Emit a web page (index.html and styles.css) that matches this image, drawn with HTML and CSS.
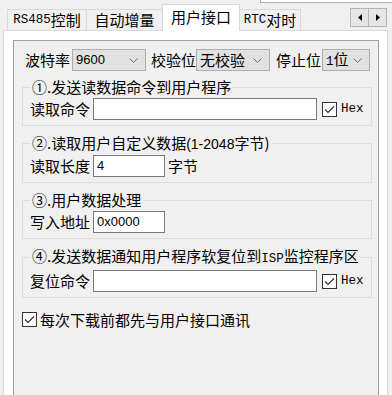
FILE: index.html
```html
<!DOCTYPE html>
<html lang="zh">
<head>
<meta charset="utf-8">
<title>用户接口</title>
<link rel="stylesheet" href="styles.css">
</head>
<body>
<div class="topstrip"><div class="topbox"></div></div>
<div class="tabbar">
  <div class="tab t1"><span class="mono">RS485</span>控制</div>
  <div class="tab t2">自动增量</div>
  <div class="tab sel">用户接口</div>
  <div class="tab t4"><span class="mono">RTC</span>对时</div>
  <div class="arrows">
    <div class="arrow"><svg width="4" height="7" viewBox="0 0 4 7"><polygon points="4,0 4,7 0,3.5" fill="#000"/></svg></div>
    <div class="arrow"><svg width="4" height="7" viewBox="0 0 4 7"><polygon points="0,0 0,7 4,3.5" fill="#000"/></svg></div>
  </div>
</div>
<div class="panel">
  <div class="frame">
    <div class="row1">
      <span class="lbl">波特率</span>
      <div class="combo c1"><span class="num">9600</span><svg class="chev" width="9" height="5" viewBox="0 0 9 5"><polyline points="0.5,0.5 4.5,4.5 8.5,0.5" fill="none" stroke="#6d6d6d"/></svg></div>
      <span class="lbl l2">校验位</span>
      <div class="combo c2"><span>无校验</span><svg class="chev" width="9" height="5" viewBox="0 0 9 5"><polyline points="0.5,0.5 4.5,4.5 8.5,0.5" fill="none" stroke="#6d6d6d"/></svg></div>
      <span class="lbl l3">停止位</span>
      <div class="combo c3"><span><span class="mono">1</span>位</span><svg class="chev" width="9" height="5" viewBox="0 0 9 5"><polyline points="0.5,0.5 4.5,4.5 8.5,0.5" fill="none" stroke="#6d6d6d"/></svg></div>
    </div>

    <fieldset class="group g1">
      <legend>①.发送读数据命令到用户程序</legend>
      <div class="line">
        <span class="lbl">读取命令</span>
        <div class="input wide"></div>
        <span class="chk"><svg width="15" height="15" viewBox="0 0 15 15"><rect x="0.5" y="0.5" width="14" height="14" fill="#fff" stroke="#333"/><polyline points="3,7.5 6,10.5 12,4.5" fill="none" stroke="#333" stroke-width="1.2"/></svg></span>
        <span class="mono hex">Hex</span>
      </div>
    </fieldset>

    <fieldset class="group">
      <legend>②.读取用户自定义数据<span class="num2">(1-2048</span>字节)</legend>
      <div class="line">
        <span class="lbl">读取长度</span>
        <div class="input short"><span class="num">4</span></div>
        <span class="lbl after">字节</span>
      </div>
    </fieldset>

    <fieldset class="group">
      <legend>③.用户数据处理</legend>
      <div class="line">
        <span class="lbl">写入地址</span>
        <div class="input short"><span class="num">0x0000</span></div>
      </div>
    </fieldset>

    <fieldset class="group">
      <legend>④.发送数据通知用户程序软复位到<span class="mono">ISP</span>监控程序区</legend>
      <div class="line">
        <span class="lbl">复位命令</span>
        <div class="input wide"></div>
        <span class="chk"><svg width="15" height="15" viewBox="0 0 15 15"><rect x="0.5" y="0.5" width="14" height="14" fill="#fff" stroke="#333"/><polyline points="3,7.5 6,10.5 12,4.5" fill="none" stroke="#333" stroke-width="1.2"/></svg></span>
        <span class="mono hex">Hex</span>
      </div>
    </fieldset>

    <div class="opt">
      <span class="chk0"><svg width="15" height="15" viewBox="0 0 15 15"><rect x="0.5" y="0.5" width="14" height="14" fill="#fff" stroke="#333"/><polyline points="3,7.5 6,10.5 12,4.5" fill="none" stroke="#333" stroke-width="1.2"/></svg></span>
      <span class="lbl">每次下载前都先与用户接口通讯</span>
    </div>
  </div>
</div>
</body>
</html>
```

FILE: styles.css
```css
html, body {
  margin: 0;
  padding: 0;
}
body {
  background: #f0f0f0;
  width: 392px;
  height: 395px;
  overflow: hidden;
  font-family: "Noto Sans CJK SC", sans-serif;
  font-size: 15px;
  line-height: 18px;
  color: #000;
}
.mono {
  font-family: "Liberation Mono", "Noto Sans CJK SC", monospace;
  font-size: 12.5px;
}
.num {
  font-family: "Liberation Sans", sans-serif;
  font-size: 13px;
}
.num2 {
  font-family: "Liberation Sans", sans-serif;
  font-size: 14px;
}

/* top fragment */
.topstrip {
  height: 3px;
  display: flex;
  justify-content: flex-end;
}
.topbox {
  width: 131px;
  height: 2px;
  background: #fff;
  border-left: 1px solid #adadad;
  border-bottom: 1px solid #adadad;
}

/* tabs */
.tabbar {
  display: flex;
  align-items: flex-start;
  height: 28px;
  margin-bottom: -1px;
  padding-left: 7px;
}
.tab {
  box-sizing: border-box;
  height: 21px;
  margin-top: 6px;
  border: 1px solid #d9d9d9;
  border-bottom: none;
  background: #f0f0f0;
  display: flex;
  align-items: center;
  justify-content: center;
  white-space: nowrap;
  padding-bottom: 1px;
}
.tab + .tab {
  margin-left: -1px;
}
.t1 { width: 80px; }
.t2 { width: 77px; }
.sel {
  width: 78px;
  height: 27px;
  margin-top: 1px;
  background: #fff;
  position: relative;
  z-index: 1;
  padding-bottom: 2px;
}
.t4 { width: 62px; }
.arrows {
  margin-left: auto;
  margin-right: 5px;
  margin-top: 5px;
  display: flex;
}
.arrow {
  box-sizing: border-box;
  width: 19px;
  height: 19px;
  border: 1px solid #b4b4b4;
  background: #e6e6e6;
  display: flex;
  align-items: center;
  justify-content: center;
}
.arrow + .arrow {
  margin-left: -1px;
}

/* panel */
.panel {
  margin-left: 3px;
  width: 385px;
  height: 365px;
  overflow: hidden;
  box-sizing: border-box;
  border: 1px solid #d9d9d9;
  border-bottom: none;
  background: #fff;
  padding: 9px 8px 0 9px;
}
.frame {
  border: 1px solid #a0a0a0;
  background: #f0f0f0;
  padding: 8px 6px 0 8px;
  height: 360px;
}

.lbl {
  white-space: nowrap;
}
.row1 {
  display: flex;
  align-items: center;
  height: 22px;
  padding-left: 3px;
}
.combo {
  box-sizing: border-box;
  height: 22px;
  border: 1px solid #adadad;
  background: #e1e1e1;
  display: flex;
  align-items: center;
  justify-content: space-between;
  padding: 0 7px 0 3px;
  white-space: nowrap;
}
.c1 { width: 74px; margin-left: 2px; }
.c2 { width: 74px; margin-left: 0; }
.c3 { width: 48px; margin-left: 1px; }
.l2 { margin-left: 5px; }
.l3 { margin-left: 6px; }
.chev { flex: none; }

/* groups */
.group {
  box-sizing: border-box;
  width: 350px;
  min-width: 0;
  margin: 9px 0 0 0;
  border: 1px solid #dcdcdc;
  padding: 3px 5px 5px 7px;
}
.g1 {
  margin-top: 8px;
}
.group legend {
  padding: 0 2px;
  line-height: 16px;
  white-space: nowrap;
}
.line {
  display: flex;
  align-items: center;
  height: 22px;
}
.input {
  box-sizing: border-box;
  height: 22px;
  border: 1px solid #7a7a7a;
  background: #fff;
  margin-left: 3px;
  display: flex;
  align-items: center;
  padding-left: 3px;
}
.wide { width: 224px; }
.short { width: 72px; }
.after { margin-left: 3px; }
.chk {
  display: flex;
  margin-left: 5px;
}
.hex {
  margin-left: 4px;
}

.opt {
  display: flex;
  align-items: center;
  height: 17px;
  margin-top: 13px;
}
.chk0 {
  display: flex;
  margin-right: 3px;
}
```
